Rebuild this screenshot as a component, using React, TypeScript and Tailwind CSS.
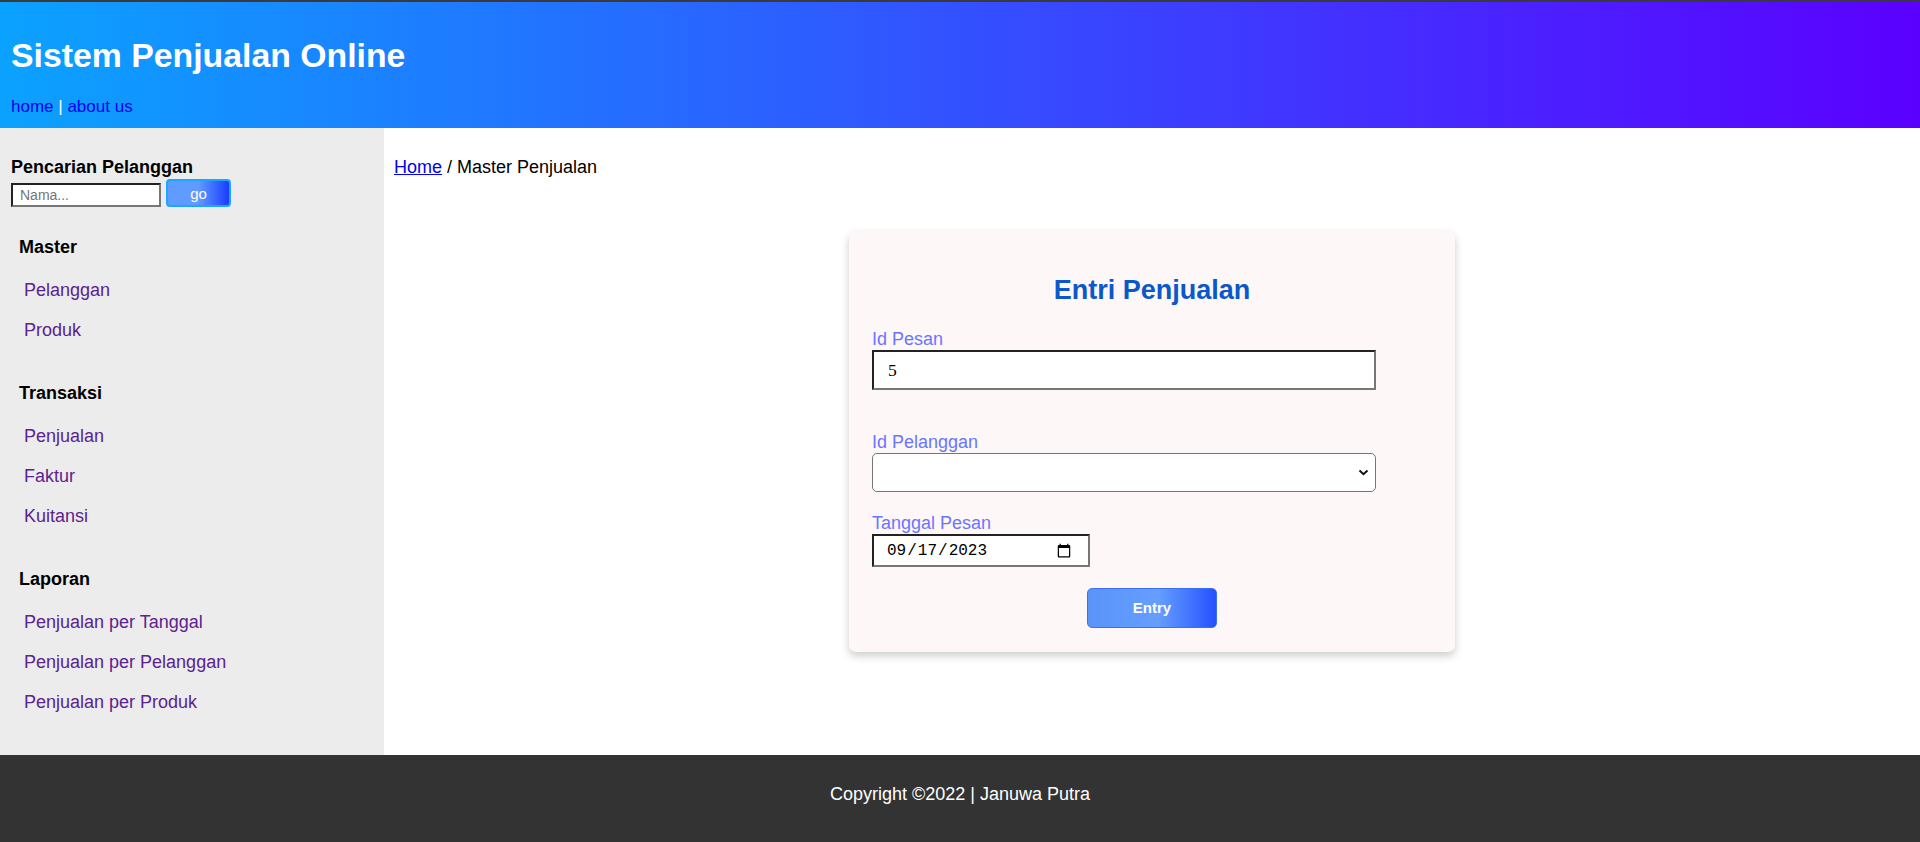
import React from "react";

const menu = [
    { title: "Master", links: ["Pelanggan", "Produk"] },
    { title: "Transaksi", links: ["Penjualan", "Faktur", "Kuitansi"] },
    { title: "Laporan", links: ["Penjualan per Tanggal", "Penjualan per Pelanggan", "Penjualan per Produk"] },
];

const Sidebar = () => {
    return (
        <aside className="w-[384px] shrink-0 bg-[#ececec] pl-[11px] pt-[29px] pb-[33px]">
            <h3 className="font-bold leading-[20px] text-black">Pencarian Pelanggan</h3>
            <div className="mt-[2px] flex items-end gap-[5px]">
                <input
                    type="text"
                    placeholder="Nama..."
                    className="w-[150px] h-[24px] bg-white border-2 border-t-[#222] border-l-[#222] border-b-[#767676] border-r-[#767676] pl-[7px] text-[14px] outline-none placeholder:text-[#757575]"
                />
                <button className="w-[65px] h-[28px] rounded-[4px] border-2 border-[#19a7ff] bg-[linear-gradient(to_right,#609bff_50%,#1a3cff)] text-white text-[15px] leading-none">
                    go
                </button>
            </div>

            <div className="mt-[30px] flex flex-col gap-[33px]">
                {menu.map((group) => (
                    <div key={group.title}>
                        <h4 className="pl-[8px] font-bold leading-[20px] mb-[13px] text-black">{group.title}</h4>
                        {group.links.map((l) => (
                            <a key={l} href="#" className="block pl-[13px] leading-[40px] text-[#5b238f]">
                                {l}
                            </a>
                        ))}
                    </div>
                ))}
            </div>
        </aside>
    );
};

const EntriForm = () => {
    return (
        <div className="w-[606px] bg-[#fdf7f7] rounded-[7px] shadow-[0_4px_8px_0_rgba(0,0,0,0.2)] px-[23px] pt-[44px] pb-[24px]">
            <h2 className="text-center text-[27px] leading-[31px] font-bold text-[#0a58ca]">Entri Penjualan</h2>

            <label className="block mt-[23px] leading-[20px] text-[#6a75ff]">Id Pesan</label>
            <input
                type="text"
                defaultValue="5"
                className="block mt-[1px] w-[504px] h-[40px] bg-white border-2 border-t-[#222] border-l-[#222] border-b-[#767676] border-r-[#767676] pl-[14px] font-['Liberation_Serif',serif] text-[17.6px] text-black outline-none"
            />

            <label className="block mt-[42px] leading-[20px] text-[#6a75ff]">Id Pelanggan</label>
            <div className="relative mt-[1px] w-[504px]">
                <select className="block appearance-none w-full h-[39px] bg-white border border-[#767676] rounded-[5px] outline-none">
                    <option value=""></option>
                </select>
                <svg className="absolute right-[7px] top-[16px] pointer-events-none" width="11" height="7" viewBox="0 0 11 7">
                    <path d="M1.5 1.5 L5.5 5.2 L9.5 1.5" fill="none" stroke="#111" strokeWidth="2" />
                </svg>
            </div>

            <label className="block mt-[21px] leading-[20px] text-[#6a75ff]">Tanggal Pesan</label>
            <input
                type="date"
                defaultValue="2023-09-17"
                className="block mt-[1px] w-[218px] h-[33px] bg-white border-2 border-t-[#222] border-l-[#222] border-b-[#767676] border-r-[#767676] pl-[12px] pr-[14px] font-['Liberation_Mono',monospace] text-[16px] text-black outline-none"
            />

            <button className="block mx-auto mt-[21px] w-[130px] h-[40px] rounded-[5px] border border-[#3c6ef5] bg-[linear-gradient(to_right,#5a94fa,#659eff_55%,#2551ff)] text-white text-[15px] font-bold">
                Entry
            </button>
        </div>
    );
};

export default function App() {
    return (
        <div className="min-h-screen flex flex-col font-['Liberation_Sans',Arial,sans-serif] text-[18px]">
            <div className="h-[2px] bg-[#3a3a3a]"></div>
            <header className="bg-[linear-gradient(to_right,#0ba2ff,#5b00ff)] pl-[11px] pt-[34px] pb-[12px]">
                <h1 className="text-[33.8px] leading-[38px] font-bold text-white">Sistem Penjualan Online</h1>
                <nav className="mt-[24px] text-[17px] leading-[18px] text-white">
                    <a href="#" className="text-[#0000ee]">home</a> | <a href="#" className="text-[#0000ee]">about us</a>
                </nav>
            </header>

            <div className="flex">
                <Sidebar />
                <main className="flex-1 bg-white pt-[29px]">
                    <div className="pl-[10px] leading-[20px] text-black">
                        <a href="#" className="text-[#0000ee] underline">Home</a> / Master Penjualan
                    </div>
                    <div className="mt-[54px] flex justify-center">
                        <EntriForm />
                    </div>
                </main>
            </div>

            <footer className="bg-[#333333] text-white text-center pt-[29px] pb-[38px] leading-[20px]">
                Copyright ©2022 | Januwa Putra
            </footer>
        </div>
    );
}
